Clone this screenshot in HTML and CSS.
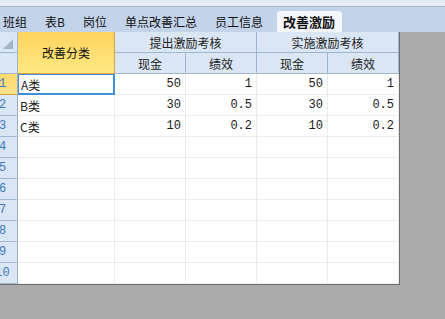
FILE: index.html
```html
<!DOCTYPE html>
<html lang="zh-CN">
  <head>
    <meta charset="UTF-8" />
    <title>改善激励</title>
    <link rel="stylesheet" href="styles.css">
  </head>
  <body>
    <div class="titlebar"></div>
    <div class="tabbar">
      <div class="tab">班组</div>
      <div class="tab">表B</div>
      <div class="tab">岗位</div>
      <div class="tab">单点改善汇总</div>
      <div class="tab">员工信息</div>
      <div class="tab active">改善激励</div>
    </div>

    <div class="workspace">
      <div class="sheet">
        <div class="grid">
          <div class="hd corner"><span class="tri"></span></div>
          <div class="hd key span-rows">改善分类</div>
          <div class="hd span-cols">提出激励考核</div>
          <div class="hd span-cols">实施激励考核</div>

          <div class="hd corner2"></div>
          <div class="hd">现金</div>
          <div class="hd">绩效</div>
          <div class="hd">现金</div>
          <div class="hd">绩效</div>

          <div class="rh sel-row">1</div>
          <div class="c sel">A类</div>
          <div class="c n">50</div>
          <div class="c n">1</div>
          <div class="c n">50</div>
          <div class="c n">1</div>

          <div class="rh">2</div>
          <div class="c">B类</div>
          <div class="c n">30</div>
          <div class="c n">0.5</div>
          <div class="c n">30</div>
          <div class="c n">0.5</div>

          <div class="rh">3</div>
          <div class="c">C类</div>
          <div class="c n">10</div>
          <div class="c n">0.2</div>
          <div class="c n">10</div>
          <div class="c n">0.2</div>

          <div class="rh">4</div><div class="c"></div><div class="c"></div><div class="c"></div><div class="c"></div><div class="c"></div>
          <div class="rh">5</div><div class="c"></div><div class="c"></div><div class="c"></div><div class="c"></div><div class="c"></div>
          <div class="rh">6</div><div class="c"></div><div class="c"></div><div class="c"></div><div class="c"></div><div class="c"></div>
          <div class="rh">7</div><div class="c"></div><div class="c"></div><div class="c"></div><div class="c"></div><div class="c"></div>
          <div class="rh">8</div><div class="c"></div><div class="c"></div><div class="c"></div><div class="c"></div><div class="c"></div>
          <div class="rh">9</div><div class="c"></div><div class="c"></div><div class="c"></div><div class="c"></div><div class="c"></div>
          <div class="rh">10</div><div class="c"></div><div class="c"></div><div class="c"></div><div class="c"></div><div class="c"></div>
        </div>
      </div>
    </div>
  </body>
</html>
```

FILE: styles.css
```css
body {
  margin: 0;
  width: 445px;
  height: 319px;
  overflow: hidden;
  background-color: #ababab;
  font-family: "Noto Sans CJK SC", "Liberation Sans", sans-serif;
  font-size: 12px;
  color: #1a1a1a;
}
.titlebar {
  height: 6px;
  background-color: #e6ecf4;
  border-bottom: 1px solid #a9b8cc;
}
.tabbar {
  display: flex;
  align-items: flex-end;
  height: 25px;
  margin-left: -6px;
  background-color: #c3d4ea;
}
.tab {
  height: 21px;
  line-height: 21px;
  padding: 0 9px;
  color: #111;
}
.tab.active {
  margin-left: 5px;
  padding: 0 7px 0 6px;
  font-size: 13px;
  font-weight: bold;
  background-color: #f4f7fc;
  border-radius: 3px 3px 0 0;
}
.workspace {
  overflow: hidden;
  width: 400px;
}
.sheet {
  margin-left: -12px;
  width: 412px;
  background-color: #fff;
  border-right: 1px solid #6e6e6e;
  border-bottom: 1px solid #6e6e6e;
  box-sizing: border-box;
}
.grid {
  display: grid;
  grid-template-columns: 30px 97px 71px 71px 71px 71px;
  grid-auto-rows: 21px;
}
.grid > div {
  box-sizing: border-box;
  border-right: 1px solid #ececec;
  border-bottom: 1px solid #ececec;
  display: flex;
  align-items: center;
  white-space: nowrap;
}
.grid > .hd {
  justify-content: center;
  background-color: #dbe6f4;
  border-right-color: #a0b6cf;
  border-bottom-color: #a0b6cf;
  color: #222;
}
.grid > .span-cols {
  grid-column: span 2;
}
.grid > .span-rows {
  grid-row: span 2;
}
.grid > .key {
  background: linear-gradient(#ffd35e, #ffe983);
  border-right-color: #dfa33b;
  border-bottom-color: #dfa33b;
  color: #111;
}
.grid > .corner {
  justify-content: flex-end;
  align-items: flex-end;
  padding: 0 4px 3px 0;
}
.tri {
  width: 10px;
  height: 10px;
  background-color: #a5b4c6;
  clip-path: polygon(100% 0, 100% 100%, 0 100%);
}
.grid > .rh {
  justify-content: center;
  background-color: #dbe6f4;
  border-right-color: #9aafc8;
  border-bottom-color: #a0b6cf;
  color: #3a78c0;
  font-family: "Liberation Mono", monospace;
  font-size: 12px;
}
.grid > .sel-row {
  background: linear-gradient(#ffd86e, #ffe38c);
  border-bottom-color: #dfa33b;
}
.grid > .c {
  padding-left: 2px;
}
.grid > .n {
  justify-content: flex-end;
  padding: 0 4px 0 0;
  font-family: "Liberation Mono", monospace;
  font-size: 12px;
}
.grid > .sel {
  border: 2px solid #3f8fdd;
  border-left-width: 1px;
  border-top-width: 1px;
}
```
